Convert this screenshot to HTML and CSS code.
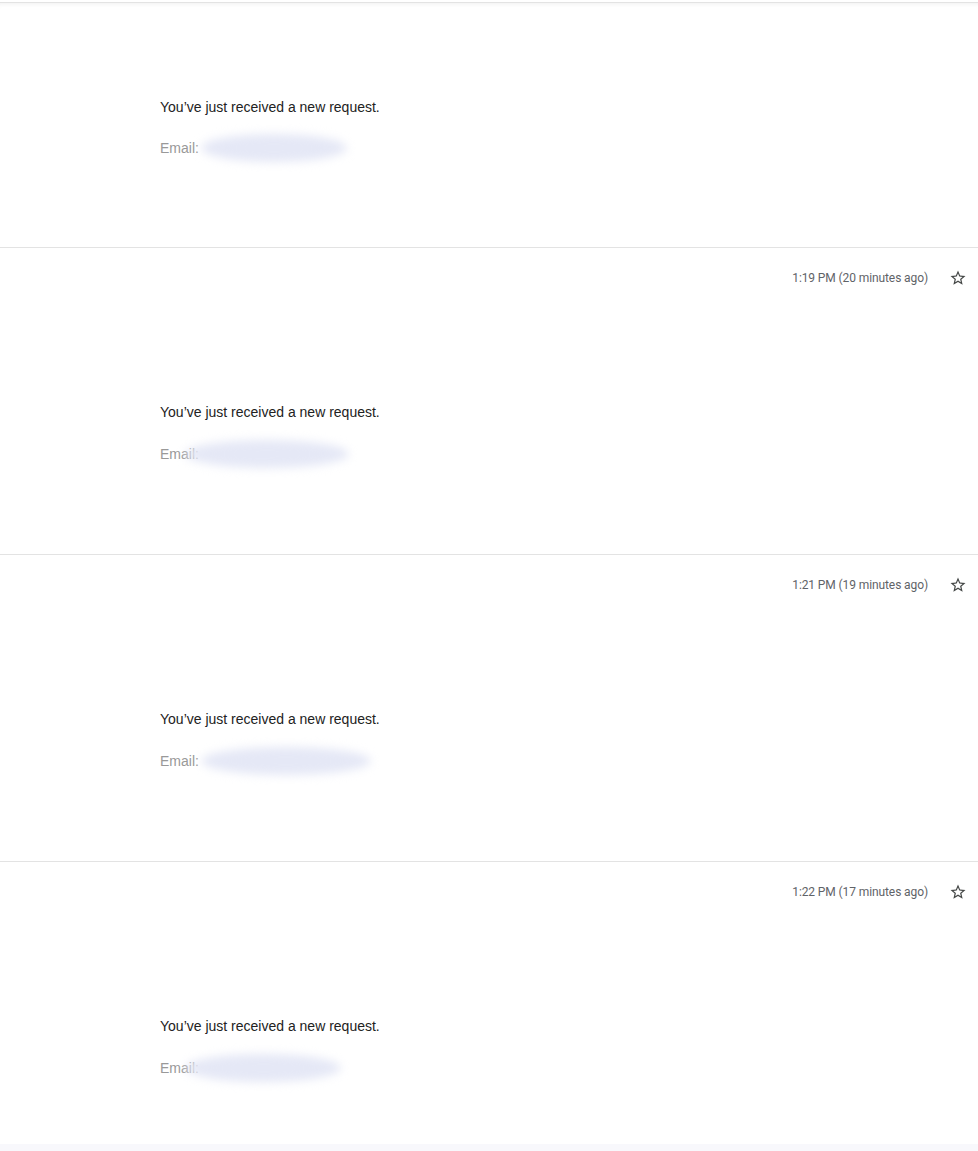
FILE: index.html
```
<!DOCTYPE html>
<html lang="en">
<head>
    <meta charset="UTF-8">
    <title>Requests</title>
    <link rel="stylesheet" href="styles.css">
</head>
<body>
<div class="thread">
    <div class="msg first">
        <div class="body">
            <p class="lead">You’ve just received a new request.</p>
            <p class="field">Email:<span class="blur b1"></span></p>
        </div>
    </div>
    <div class="msg">
        <div class="head">
            <span class="time">1:19 PM (20 minutes ago)</span>
            <svg class="star" viewBox="0 0 24 24"><path d="M22 9.24l-7.19-.62L12 2 9.19 8.63 2 9.24l5.46 4.73L5.82 21 12 17.27 18.18 21l-1.63-7.03L22 9.24zM12 15.4l-3.76 2.27 1-4.28-3.32-2.88 4.38-.38L12 6.1l1.71 4.04 4.38.38-3.32 2.88 1 4.28L12 15.4z"/></svg>
        </div>
        <div class="body">
            <p class="lead">You’ve just received a new request.</p>
            <p class="field">Email:<span class="blur b2"></span></p>
        </div>
    </div>
    <div class="msg">
        <div class="head">
            <span class="time">1:21 PM (19 minutes ago)</span>
            <svg class="star" viewBox="0 0 24 24"><path d="M22 9.24l-7.19-.62L12 2 9.19 8.63 2 9.24l5.46 4.73L5.82 21 12 17.27 18.18 21l-1.63-7.03L22 9.24zM12 15.4l-3.76 2.27 1-4.28-3.32-2.88 4.38-.38L12 6.1l1.71 4.04 4.38.38-3.32 2.88 1 4.28L12 15.4z"/></svg>
        </div>
        <div class="body">
            <p class="lead">You’ve just received a new request.</p>
            <p class="field">Email:<span class="blur b3"></span></p>
        </div>
    </div>
    <div class="msg last">
        <div class="head">
            <span class="time">1:22 PM (17 minutes ago)</span>
            <svg class="star" viewBox="0 0 24 24"><path d="M22 9.24l-7.19-.62L12 2 9.19 8.63 2 9.24l5.46 4.73L5.82 21 12 17.27 18.18 21l-1.63-7.03L22 9.24zM12 15.4l-3.76 2.27 1-4.28-3.32-2.88 4.38-.38L12 6.1l1.71 4.04 4.38.38-3.32 2.88 1 4.28L12 15.4z"/></svg>
        </div>
        <div class="body">
            <p class="lead">You’ve just received a new request.</p>
            <p class="field">Email:<span class="blur b4"></span></p>
        </div>
    </div>
</div>
<div class="foot"></div>
</body>
</html>
```
FILE: styles.css
```
* {
    margin: 0;
    padding: 0;
}

body {
    background: #fff;
    font-family: Arial, "Liberation Sans", sans-serif;
    padding-top: 2px;
}

.thread {
    border-top: 1px solid #e3e3e3;
    box-shadow: inset 0 4px 4px -3px #f0f0f0;
}

.msg {
    height: 306px;
    border-bottom: 1px solid #e3e3e3;
}

.msg.first {
    height: 244px;
}

.msg.last {
    height: 282px;
    border-bottom: 0;
}

.head {
    display: flex;
    justify-content: flex-end;
    align-items: center;
    height: 20px;
    padding: 20px 11px 0 0;
    gap: 21px;
}

.time {
    font-family: Roboto, "Liberation Sans", sans-serif;
    font-size: 12px;
    color: #5f6368;
    letter-spacing: -0.1px;
}

.star {
    width: 18px;
    height: 18px;
    fill: #444746;
}

.body {
    padding: 114px 0 0 160px;
}

.msg.first .body {
    padding-top: 94px;
}

.lead {
    font-size: 14px;
    line-height: 20px;
    color: #222;
}

.field {
    margin-top: 22px;
    height: 20px;
    font-size: 14px;
    line-height: 20px;
    color: #999;
    display: flex;
    align-items: center;
}

.msg.first .field {
    margin-top: 21px;
}

.blur {
    display: inline-block;
    flex: none;
    height: 28px;
    border-radius: 50%;
    background: #e5e8f6;
    filter: blur(5px);
}

.b1 {
    width: 146px;
    margin-left: 2px;
}

.b2 {
    width: 164px;
    margin-left: -14px;
}

.b3 {
    width: 170px;
    margin-left: 2px;
}

.b4 {
    width: 156px;
    margin-left: -14px;
}

.foot {
    height: 8px;
    background: #f8f8fc;
}
```
